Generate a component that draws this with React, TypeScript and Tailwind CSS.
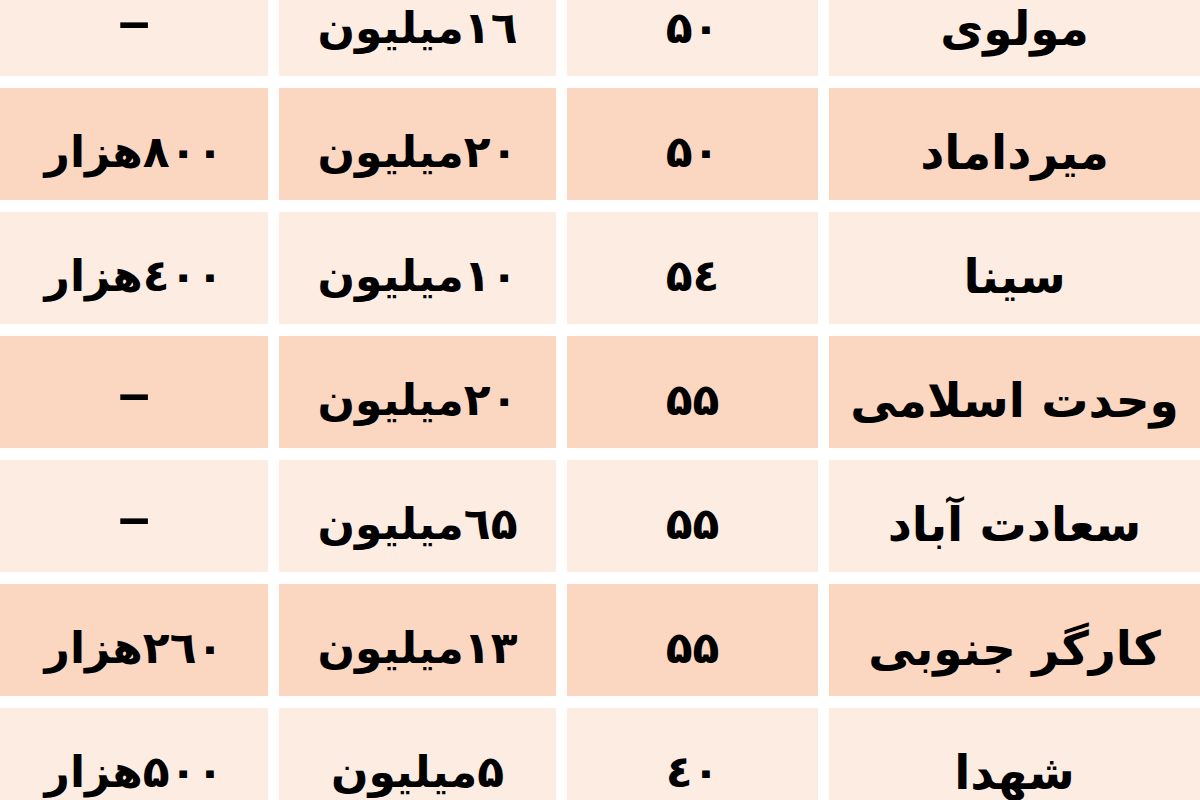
import React from "react";

const rows: { name: string; area: string; deposit: string; rent: string }[] = [
  { name: "مولوی", area: "۵۰", deposit: "۱٦میلیون", rent: "–" },
  { name: "میرداماد", area: "۵۰", deposit: "۲۰میلیون", rent: "۸۰۰هزار" },
  { name: "سینا", area: "۵٤", deposit: "۱۰میلیون", rent: "٤۰۰هزار" },
  { name: "وحدت اسلامی", area: "۵۵", deposit: "۲۰میلیون", rent: "–" },
  { name: "سعادت آباد", area: "۵۵", deposit: "٦۵میلیون", rent: "–" },
  { name: "کارگر جنوبی", area: "۵۵", deposit: "۱۳میلیون", rent: "۲٦۰هزار" },
  { name: "شهدا", area: "٤۰", deposit: "۵میلیون", rent: "۵۰۰هزار" },
];

export default function App() {
  const cell = "flex items-center justify-center pt-[16px]";
  return (
    <div className="w-[1200px] h-[800px] overflow-hidden bg-white">
      <div
        dir="rtl"
        className="mt-[-36px] grid grid-cols-[1fr_251px_277px_268px] auto-rows-[112px] gap-x-[11px] gap-y-[12px] text-black font-bold text-[44px] leading-none"
        style={{ fontFamily: '"DejaVu Sans", sans-serif' }}
      >
        {rows.map((r, i) => {
          const bg = i % 2 === 0 ? "bg-[#fdece2]" : "bg-[#fbd7c2]";
          return (
            <React.Fragment key={i}>
              <div className={`${bg} ${cell} text-[47px]`}>{r.name}</div>
              <div className={`${bg} ${cell}`}>{r.area}</div>
              <div className={`${bg} ${cell}`}>{r.deposit}</div>
              <div className={`${bg} ${cell}`}>
                {r.rent === "–" ? (
                  <span className="inline-block scale-x-[1.6] -translate-y-[6px]">–</span>
                ) : (
                  r.rent
                )}
              </div>
            </React.Fragment>
          );
        })}
      </div>
    </div>
  );
}
